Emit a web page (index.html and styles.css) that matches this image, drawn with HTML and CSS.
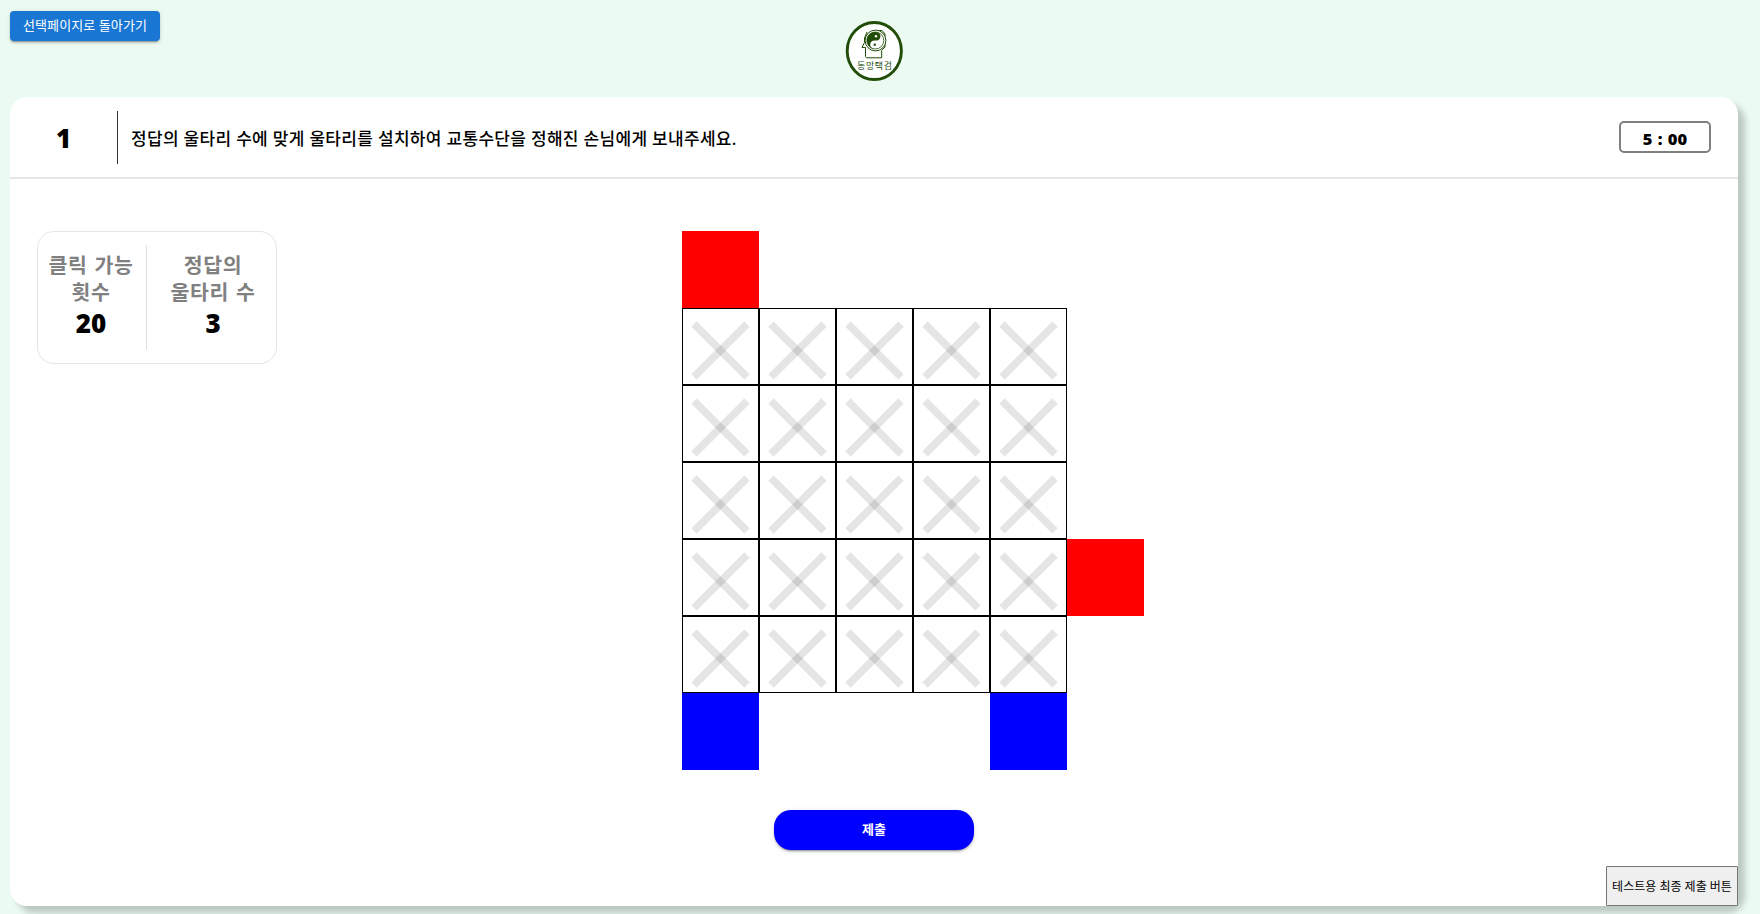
FILE: index.html
```html
<!DOCTYPE html>
<html lang="ko">
<head>
<meta charset="utf-8">
<title>동망택검</title>
<link rel="stylesheet" href="styles.css">
</head>
<body>
<header class="top">
  <button class="back">선택페이지로 돌아가기</button>
  <svg class="logo" width="60" height="60" viewBox="0 0 60 60">
    <ellipse cx="30.300" cy="30" rx="27.100" ry="28.500" fill="#fff" stroke="#214d09" stroke-width="2.900"/>
    <path d="M23 11 L20.500 17 V21.500 L18 26.500 H21.500 V35.500 L22.500 36.800 H37.700 V29.500 L41 26 V13 L38 9.500 H33" fill="#fff" stroke="#214d09" stroke-width="1"/>
    <circle cx="31.500" cy="19.500" r="10.400" fill="#fff" stroke="#214d09" stroke-width="1"/>
    <circle cx="31.300" cy="19.500" r="8.500" fill="#fff" stroke="#214d09" stroke-width=".8"/>
    <path d="M31.300 11 A8.500 8.500 0 0 0 31.300 28 A4.250 4.250 0 0 1 31.300 19.500 A4.250 4.250 0 0 0 31.300 11Z" fill="#214d09" transform="rotate(12 31.300 19.500)"/>
    <circle cx="32" cy="15.300" r="1.200" fill="#fff"/>
    <circle cx="30.800" cy="23.800" r="1.200" fill="#214d09"/>
    <text class="logo-text" x="30.500" y="47.500" text-anchor="middle" textLength="35">동망택검</text>
  </svg>
</header>
<main class="card">
  <section class="question">
    <div class="number">1</div>
    <p class="prompt">정답의 울타리 수에 맞게 울타리를 설치하여 교통수단을 정해진 손님에게 보내주세요.</p>
    <div class="timer">5 : 00</div>
  </section>
  <section class="play">
    <aside class="stats">
      <div class="stat"><span class="label">클릭 가능<br>횟수</span><b class="value">20</b></div>
      <div class="stat"><span class="label">정답의<br>울타리 수</span><b class="value">3</b></div>
    </aside>
    <div class="board" id="board"></div>
  </section>
  <button class="submit">제출</button>
  <button class="final">테스트용 최종 제출 버튼</button>
</main>
<script src="board.js"></script>
</body>
</html>
```
FILE: styles.css
```css
* { box-sizing: border-box; }
body {
  margin: 0;
  height: 914px;
  padding: 11px 22px 8px 10px;
  overflow: hidden;
  display: flex;
  flex-direction: column;
  background: #ebfbf2;
  color: #000;
  font-family: "Noto Sans", "Noto Sans CJK KR", sans-serif;
}
button { font-family: inherit; padding: 0; white-space: nowrap; }
.top {
  height: 86px;
  display: grid;
  grid-template-columns: 1fr 60px 1fr;
  align-items: start;
}
.back {
  width: 150px;
  height: 30px;
  border: 0;
  border-radius: 4px;
  background: #1976d2;
  color: #fff;
  font-size: 13px;
  font-weight: 400;
  line-height: 27px;
  letter-spacing: 0.1px;
  padding-bottom: 2px;
  box-shadow: 0 3px 1px -2px rgba(0,0,0,.2), 0 2px 2px 0 rgba(0,0,0,.14), 0 1px 5px 0 rgba(0,0,0,.12);
}
.logo { margin-top: 10px; }
.logo-text { font-size: 9px; fill: #214d09; }
.card {
  flex: 1;
  display: flex;
  flex-direction: column;
  background: #fff;
  border-radius: 17px;
  box-shadow: 7px 7px 6px rgba(0,0,0,.2);
}
.question {
  height: 82px;
  display: flex;
  align-items: center;
  border-bottom: 2px solid #e5e5e5;
  padding-right: 27px;
}
.number {
  width: 108px;
  height: 53px;
  border-right: 1px solid #333;
  font-size: 26px;
  font-weight: 900;
  line-height: 54px;
  text-align: center;
}
.prompt {
  flex: 1;
  margin: 0 0 0 13px;
  font-size: 17px;
  font-weight: 500;
  letter-spacing: 0.31px;
  white-space: nowrap;
}
.timer {
  width: 92px;
  height: 32px;
  border: 2px solid #808080;
  border-radius: 5px;
  font-size: 16.5px;
  font-weight: 900;
  line-height: 32px;
  word-spacing: 1px;
  text-align: center;
}
.play {
  display: grid;
  grid-template-columns: 240px 539px;
  column-gap: 404.5px;
  align-items: start;
  padding: 52px 0 0 27px;
}
.stats {
  height: 133px;
  display: grid;
  grid-template-columns: 109px 1fr;
  padding: 13px 0;
  border: 1px solid #e5e5e5;
  border-radius: 17px;
}
.stat {
  display: flex;
  flex-direction: column;
  align-items: center;
  padding-top: 7px;
}
.stat:first-child { border-right: 1px solid #e0e0e0; padding-right: 2px; }
.stat:last-child { padding-left: 3px; }
.label {
  color: #808080;
  font-size: 20.5px;
  font-weight: 700;
  line-height: 27px;
  letter-spacing: 0.6px;
  word-spacing: 1px;
  text-align: center;
}
.value { font-size: 26px; font-weight: 900; line-height: 34px; }
.board {
  display: grid;
  grid-template-columns: repeat(7, 77px);
  grid-template-rows: repeat(7, 77px);
}
.cell { border: 1px solid #000; padding-top: 4px; }
.cell svg { display: block; overflow: visible; }
.guest { background: #f00; }
.vehicle { background: #00f; }
.submit {
  width: 200px;
  height: 40px;
  margin: 40px auto 0 764px;
  border: 0;
  border-radius: 17px;
  background: #00f;
  color: #fff;
  font-size: 13px;
  font-weight: 700;
  line-height: 36px;
  padding-bottom: 2px;
  box-shadow: 0 3px 1px -2px rgba(0,0,0,.2), 0 2px 2px 0 rgba(0,0,0,.14), 0 1px 5px 0 rgba(0,0,0,.12);
}
.final {
  width: 132px;
  height: 40px;
  margin: auto 0 0 auto;
  border: 1px solid #767676;
  border-radius: 1px;
  background: #efefef;
  color: #000;
  font-size: 12px;
  padding-bottom: 1px;
}
```
FILE: board.js
```javascript
// Row-major 7x7 layout: r = red, b = blue, x = cell, . = empty
const rows = [
  "r......",
  "xxxxx..",
  "xxxxx..",
  "xxxxx..",
  "xxxxxr.",
  "xxxxx..",
  "b...b.."
];
const cross = '<svg width="75" height="75" viewBox="0 0 75 75"><g stroke="#000" stroke-opacity=".1" stroke-width="7.5"><path d="M10.980 10.980 L64.020 64.020"/><path d="M64.020 10.980 L10.980 64.020"/></g></svg>';
const classes = { r: "guest", b: "vehicle", x: "cell", ".": "blank" };
const board = document.getElementById("board");
for (const row of rows) {
  for (const c of row) {
    const el = document.createElement("div");
    el.className = classes[c];
    if (c === "x") el.innerHTML = cross;
    board.append(el);
  }
}
```
